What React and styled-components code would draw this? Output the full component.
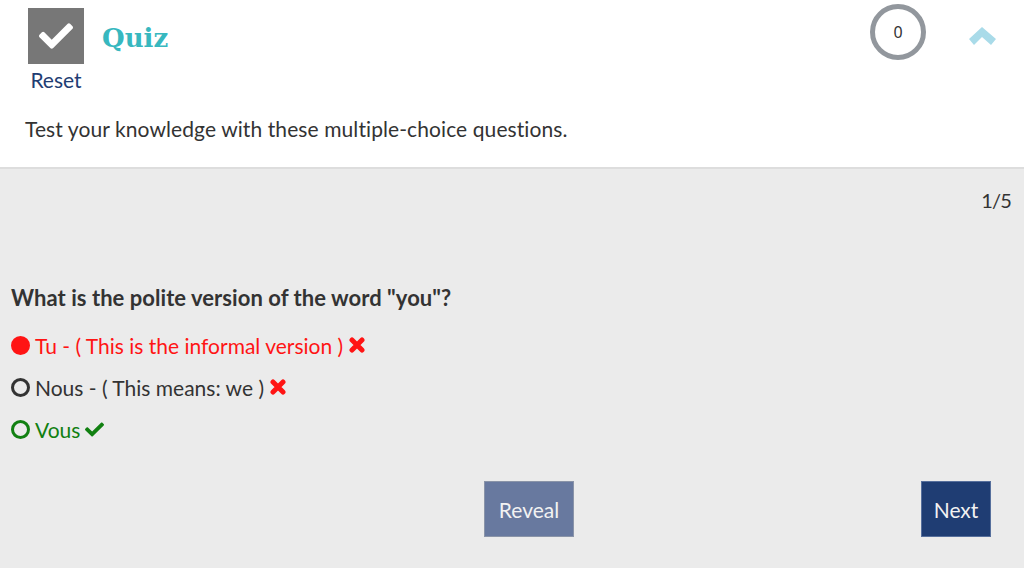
import React from 'react'
import styled, { createGlobalStyle } from 'styled-components'
import { FaCheck } from 'react-icons/fa'

const GlobalStyle = createGlobalStyle`
  html, body {
    margin: 0;
    padding: 0;
    background: #ebebeb;
  }
  body {
    font-family: "Lato", "Noto Sans", sans-serif;
    font-variant-ligatures: none;
    color: #333;
    overflow: hidden;
  }
`

const Page = styled.div`
  width: 1024px;
  height: 568px;
  display: flex;
  flex-direction: column;
`

const Header = styled.header`
  height: 169px;
  box-sizing: border-box;
  background: #fff;
  border-bottom: 2px solid #ddd;
  padding: 8px 28px 0 25px;
`

const TopRow = styled.div`
  display: flex;
  align-items: flex-start;
  height: 88px;
`

const ResetBlock = styled.div`
  width: 62px;
  display: flex;
  flex-direction: column;
  align-items: center;
`

const CheckBox = styled.div`
  width: 56px;
  height: 56px;
  background: #777;
  display: flex;
  align-items: center;
  justify-content: center;
  color: #fff;
  font-size: 34px;
`

const ResetLink = styled.a`
  margin-top: 3px;
  font-size: 21px;
  line-height: 26px;
  color: #1f3d73;
`

const Title = styled.h2`
  margin: 10px 0 0 15px;
  font-family: "DejaVu Serif", serif;
  font-weight: 700;
  font-size: 26px;
  line-height: 40px;
  color: #37b8bf;
  flex: 1;
`

const Score = styled.div`
  width: 56px;
  height: 56px;
  margin-top: -4px;
  box-sizing: border-box;
  border: 5px solid #92979d;
  border-radius: 50%;
  display: flex;
  align-items: center;
  justify-content: center;
  font-family: "Noto Sans", sans-serif;
  font-size: 16px;
`

const Collapse = styled.svg`
  margin: 19px 0 0 43px;
  width: 27px;
  height: 18px;
  fill: #a9dbe9;
`

const Intro = styled.p`
  margin: 19px 0 0;
  font-size: 21px;
  line-height: 28px;
  letter-spacing: 0.09px;
`

const Panel = styled.main`
  flex: 1;
  display: flex;
  flex-direction: column;
  padding: 0 13px 0 11px;
`

const Counter = styled.div`
  margin-top: 17px;
  text-align: right;
  font-size: 20px;
  line-height: 28px;
  letter-spacing: -0.8px;
`

const Question = styled.h3`
  margin: 70px 0 0;
  font-size: 22px;
  line-height: 28px;
  font-weight: 700;
  letter-spacing: 0.05px;
`

const Options = styled.ul`
  list-style: none;
  margin: 19px 0 0;
  padding: 0;
  display: flex;
  flex-direction: column;
  gap: 14px;
`

const Option = styled.li`
  display: flex;
  align-items: center;
  gap: 5px;
  height: 28px;
  font-size: 21px;
  color: ${p => p.$color};
`

const Radio = styled.span`
  width: 19px;
  height: 19px;
  box-sizing: border-box;
  border-radius: 50%;
  border: 3px solid ${p => p.$color};
  background: ${p => (p.$filled ? p.$color : 'transparent')};
`

const Mark = styled.span`
  display: flex;
  font-size: 19px;
  color: #118011;
`

const CrossIcon = styled.svg`
  width: 16px;
  height: 16px;
  margin-left: 1px;
  stroke: #ff1414;
  stroke-width: 5;
  stroke-linecap: round;
`

const Actions = styled.div`
  display: flex;
  justify-content: space-between;
  margin-top: 38px;
  padding: 0 20px 0 473px;
`

const Button = styled.button`
  height: 56px;
  width: ${p => p.$width}px;
  padding: 0;
  font-family: inherit;
  font-size: 21px;
  color: #f2f2f2;
  background: ${p => p.$bg};
  border: 1px solid ${p => p.$edge};
`

const options = [
  { label: 'Tu - ( This is the informal version )', color: '#ff1414', filled: true, correct: false },
  { label: 'Nous - ( This means: we )', color: '#333', correct: false },
  { label: 'Vous', color: '#118011', correct: true },
]

export default function App() {
  return (
    <Page>
      <GlobalStyle />
      <Header>
        <TopRow>
          <ResetBlock>
            <CheckBox><FaCheck /></CheckBox>
            <ResetLink>Reset</ResetLink>
          </ResetBlock>
          <Title>Quiz</Title>
          <Score>0</Score>
          <Collapse viewBox="0 0 27 18">
            <polygon points="13,0 27,12 22,18 13,10 5,18 0,12" />
          </Collapse>
        </TopRow>
        <Intro>Test your knowledge with these multiple-choice questions.</Intro>
      </Header>
      <Panel>
        <Counter>1/5</Counter>
        <Question>What is the polite version of the word "you"?</Question>
        <Options>
          {options.map(o => (
            <Option key={o.label} $color={o.color}>
              <Radio $color={o.color} $filled={o.filled} />
              {o.label}
              <Mark>
                {o.correct ? (
                  <FaCheck />
                ) : (
                  <CrossIcon viewBox="0 0 16 16">
                    <path d="M3 3 L13 13 M13 3 L3 13" />
                  </CrossIcon>
                )}
              </Mark>
            </Option>
          ))}
        </Options>
        <Actions>
          <Button $width={90} $bg="#68799f" $edge="#8a94a8">Reveal</Button>
          <Button $width={70} $bg="#1f3d73" $edge="#566f9c">Next</Button>
        </Actions>
      </Panel>
    </Page>
  )
}
